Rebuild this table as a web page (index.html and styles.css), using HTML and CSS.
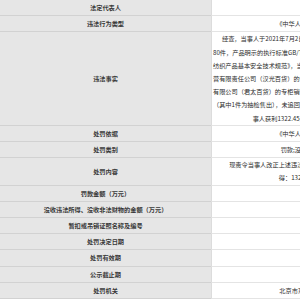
FILE: index.html
```html
<!DOCTYPE html>
<html lang="zh-CN">
<head>
<meta charset="utf-8">
<title>行政处罚信息</title>
<link rel="stylesheet" href="styles.css">
</head>
<body>
<div class="table">
  <div class="label">法定代表人</div>
  <div class="value"></div>

  <div class="label">违法行为类型</div>
  <div class="value">《中华人民共和国产品质量法》</div>

  <div class="label">违法事实</div>
  <div class="value block">
    <span class="ln first">经查，当事人于2021年7月2日，从北京某服装有限公司购进儿童服装共计</span>
    <span class="ln">80件，产品明示的执行标准GB/T 31900-2015，经抽样检验，不符合GB 31701-2015《婴幼儿及儿童</span>
    <span class="ln">纺织产品基本安全技术规范》，当事人将上述产品分别放置于北京汉光百货有限责任公司经</span>
    <span class="ln">营有限责任公司（汉光百货）的专柜及北京君太百货有限公司销售，其中在北京君太百货</span>
    <span class="ln">有限公司（君太百货）的专柜销售上述产品共计10件，货值金额共计人民币12000元</span>
    <span class="ln">（其中1件为抽检售出），未追回，其余产品已全部下架封存，经核算，截至案发，当</span>
    <span class="ln">事人获利1322.45元，以上事实有相关证据证实。</span>
  </div>

  <div class="label">处罚依据</div>
  <div class="value">《中华人民共和国产品质量法》</div>

  <div class="label">处罚类别</div>
  <div class="value">罚款;没收违法所得;没收财物</div>

  <div class="label">处罚内容</div>
  <div class="value block">
    <span class="ln first">现责令当事人改正上述违法行为，并作出如下行政处罚：没收违法所</span>
    <span class="ln">得：1322.45元；罚款3万元。</span>
  </div>

  <div class="label">罚款金额（万元）</div>
  <div class="value"></div>

  <div class="label">没收违法所得、没收非法财物的金额（万元）</div>
  <div class="value"></div>

  <div class="label">暂扣或吊销证照名称及编号</div>
  <div class="value"></div>

  <div class="label">处罚决定日期</div>
  <div class="value"></div>

  <div class="label">处罚有效期</div>
  <div class="value"></div>

  <div class="label">公示截止期</div>
  <div class="value"></div>

  <div class="label">处罚机关</div>
  <div class="value">北京市东城区市场监督管理局</div>
</div>
</body>
</html>
```

FILE: styles.css
```css
html, body {
  margin: 0;
  padding: 0;
  overflow: hidden;
  background: #ffffff;
}

.table {
  display: grid;
  grid-template-columns: 211px 216px;
  width: 427px;
  font-family: "Noto Sans CJK SC", "Noto Sans", sans-serif;
  font-size: 6.2px;
  line-height: 13.2px;
  color: #2a2a2a;
}

.label,
.value {
  min-height: 15.2px;
  display: flex;
  align-items: center;
  justify-content: center;
  text-align: center;
  white-space: nowrap;
}

.label {
  background: #e6e6e6;
  border-bottom: 1px solid #d2d2d2;
  color: #383838;
  font-weight: 700;
}

.value {
  background: #ffffff;
  border-bottom: 1px solid #e4e4e4;
  border-left: 1px solid #dcdcdc;
  padding: 0 1px;
}

.value.block {
  display: block;
}

.ln {
  display: block;
  white-space: nowrap;
  text-align: center;
}

.ln.first {
  padding-left: 5px;
}
```
